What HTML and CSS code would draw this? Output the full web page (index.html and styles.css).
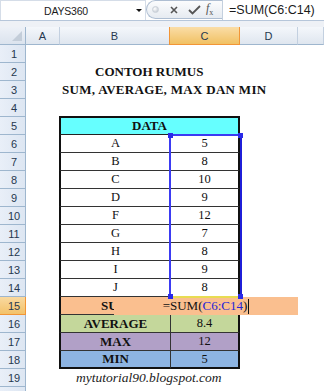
FILE: index.html
```html
<!DOCTYPE html>
<html lang="en">
<head>
  <meta charset="UTF-8" />
  <title>Contoh Rumus</title>
  <link rel="stylesheet" href="styles.css">
</head>
<body>
  <!-- Formula bar -->
  <div class="formula-bar">
    <div class="name-box">
      <span class="name">DAYS360</span>
      <span class="drop"></span>
    </div>
    <div class="fx-group">
      <span class="knob"></span>
      <svg class="btn-cancel" width="8" height="8" viewBox="0 0 8 8">
        <path d="M1 1 L7 7 M7 1 L1 7" stroke="#555" stroke-width="1.6" fill="none" />
      </svg>
      <svg class="btn-ok" width="13" height="10" viewBox="0 0 13 10">
        <path d="M1 5 L4.5 8.5 L12 1" stroke="#555" stroke-width="1.8" fill="none" />
      </svg>
      <span class="fx"><i>f</i><sub>x</sub></span>
    </div>
    <div class="formula-input">=SUM(C6:C14)</div>
  </div>
  <div class="strip"></div>

  <!-- Worksheet -->
  <div class="sheet">
    <div class="row head">
      <div class="corner"></div>
      <div class="ch">A</div>
      <div class="ch">B</div>
      <div class="ch on">C</div>
      <div class="ch">D</div>
      <div class="ch"></div>
    </div>

    <div class="row"><div class="rh">1</div></div>
    <div class="row"><div class="rh">2</div><div class="title t1">CONTOH RUMUS</div></div>
    <div class="row"><div class="rh">3</div><div class="title t2">SUM, AVERAGE, MAX DAN MIN</div></div>
    <div class="row"><div class="rh">4</div></div>
    <div class="row">
      <div class="rh">5</div><div class="c"></div>
      <div class="c data-head lbl">DATA</div>
    </div>
    <div class="row"><div class="rh">6</div><div class="c"></div><div class="c tb">A</div><div class="c tc">5</div></div>
    <div class="row"><div class="rh">7</div><div class="c"></div><div class="c tb">B</div><div class="c tc">8</div></div>
    <div class="row"><div class="rh">8</div><div class="c"></div><div class="c tb">C</div><div class="c tc">10</div></div>
    <div class="row"><div class="rh">9</div><div class="c"></div><div class="c tb">D</div><div class="c tc">9</div></div>
    <div class="row"><div class="rh">10</div><div class="c"></div><div class="c tb">F</div><div class="c tc">12</div></div>
    <div class="row"><div class="rh">11</div><div class="c"></div><div class="c tb">G</div><div class="c tc">7</div></div>
    <div class="row"><div class="rh">12</div><div class="c"></div><div class="c tb">H</div><div class="c tc">8</div></div>
    <div class="row"><div class="rh">13</div><div class="c"></div><div class="c tb">I</div><div class="c tc">9</div></div>
    <div class="row"><div class="rh">14</div><div class="c"></div><div class="c tb">J</div><div class="c tc">8</div></div>
    <div class="row">
      <div class="rh on">15</div><div class="c"></div>
      <div class="c tb lbl sum">SUM</div><div class="c tc sum"></div>
    </div>
    <div class="row">
      <div class="rh">16</div><div class="c"></div>
      <div class="c tb lbl avg">AVERAGE</div><div class="c tc avg">8.4</div>
    </div>
    <div class="row">
      <div class="rh">17</div><div class="c"></div>
      <div class="c tb lbl max">MAX</div><div class="c tc max">12</div>
    </div>
    <div class="row">
      <div class="rh">18</div><div class="c"></div>
      <div class="c tb lbl min last">MIN</div><div class="c tc min last">5</div>
    </div>
    <div class="row"><div class="rh">19</div><div class="credit">mytutorial90.blogspot.com</div></div>
    <div class="row"><div class="rh"></div></div>

    <!-- range being referenced while editing C15 -->
    <div class="selection">
      <span class="handle h-tl"></span>
      <span class="handle h-tr"></span>
      <span class="handle h-bl"></span>
      <span class="handle h-br"></span>
    </div>
    <div class="editor">=SUM(<span class="ref">C6:C14</span>)<span class="caret"></span></div>
  </div>
</body>
</html>
```

FILE: styles.css
```css
/* Global */
body {
  margin: 0;
  background-color: #ffffff;
  font-family: "Liberation Sans", Arial, sans-serif;
  color: #1b1b1b;
}

/* Formula bar */
.formula-bar {
  display: flex;
  height: 21px;
  background-color: #ffffff;
  border-bottom: 1px solid #b6c6da;
  box-sizing: border-box;
}
.name-box {
  width: 146px;
  display: flex;
  align-items: center;
  border: 1px solid #d5dde8;
  border-bottom: none;
  box-sizing: border-box;
}
.name {
  width: 130px;
  text-align: center;
  font-size: 10.5px;
  letter-spacing: -0.2px;
}
.drop {
  margin-left: 5px;
  width: 0;
  height: 0;
  border-left: 3px solid transparent;
  border-right: 3px solid transparent;
  border-top: 3px solid #111;
}
.fx-group {
  width: 76px;
  height: 19px;
  display: flex;
  align-items: center;
  border: 1px solid #aebed2;
  border-right: none;
  border-radius: 10px 0 0 10px;
  background: linear-gradient(#fbfcfd, #e6ebf1);
  box-sizing: border-box;
}
.knob {
  width: 7px;
  height: 7px;
  margin-left: 5px;
  border-radius: 50%;
  background: radial-gradient(circle at 35% 35%, #ffffff, #b9c1cb);
  border: 1px solid #c9d0d8;
  box-sizing: border-box;
}
.btn-cancel {
  margin-left: 11px;
}
.btn-ok {
  margin-left: 10px;
}
.fx {
  margin-left: 5px;
  font-family: "Liberation Serif", serif;
  font-size: 12px;
  color: #555;
}
.fx sub {
  font-size: 8px;
}
.formula-input {
  flex: 1;
  padding-left: 6px;
  font-size: 12.5px;
  line-height: 20px;
  border-left: 1px solid #c4d0de;
}
.strip {
  height: 6px;
  background-color: #eef1f6;
}

/* Sheet grid */
.sheet {
  position: relative;
}
.row {
  display: grid;
  grid-template-columns: 26px 34px 110px 70px 58px 1fr;
  height: 18px;
}
.rh,
.ch,
.corner {
  display: flex;
  align-items: center;
  justify-content: center;
  box-sizing: border-box;
  font-size: 11px;
  color: #26384f;
  border-bottom: 1px solid #9eb6ce;
}
.rh {
  padding-left: 3px;
  background: linear-gradient(to right, #e9eff8, #dde6f2);
  border-right: 1px solid #9eb6ce;
}
.rh.on {
  background: linear-gradient(#f9d9a0, #f3c26a);
  border-bottom-color: #f29536;
  border-right-color: #f29536;
}
.ch {
  background: linear-gradient(#f4f7fb, #dfe6ef);
  border-right: 1px solid #c3d0e0;
}
.ch.on {
  background: linear-gradient(#fadda7, #f1c163);
  border-left: 1px solid #f29536;
  border-right-color: #f29536;
  border-bottom-color: #f29536;
  margin-left: -1px;
}
.corner {
  position: relative;
  background: linear-gradient(#edf1f7, #dbe3ee);
  border-right: 1px solid #9eb6ce;
}
.corner::after {
  content: "";
  position: absolute;
  right: 3px;
  bottom: 3px;
  border-left: 10px solid transparent;
  border-bottom: 10px solid #c3cdd9;
}

/* Cells */
.c {
  display: flex;
  align-items: center;
  justify-content: center;
  box-sizing: border-box;
  font-family: "Liberation Serif", "Times New Roman", serif;
  font-size: 12.5px;
  color: #111;
}
.lbl {
  font-weight: bold;
  font-size: 13px;
}
.title {
  grid-column: 2 / -1;
  display: flex;
  align-items: center;
  font-family: "Liberation Serif", "Times New Roman", serif;
  font-weight: bold;
  font-size: 13px;
  color: #111;
}
.t1 {
  padding-left: 69px;
}
.t2 {
  padding-left: 36px;
  letter-spacing: 0.3px;
}
.credit {
  grid-column: 2 / -1;
  display: flex;
  align-items: center;
  padding-left: 50px;
  font-family: "Liberation Serif", "Times New Roman", serif;
  font-style: italic;
  font-size: 13.5px;
  color: #222;
}

/* Table */
.data-head {
  grid-column: 3 / 5;
  background-color: #66ffff;
  border: 2px solid #111;
  border-bottom: 1px solid #222;
  margin-left: -1px;
  margin-top: -1px;
  height: 19px;
}
.tb {
  border-left: 2px solid #111;
  border-bottom: 1px solid #333;
  margin-left: -1px;
}
.tc {
  border-left: 1px solid #333;
  border-right: 2px solid #111;
  border-bottom: 1px solid #333;
}
.tc.last,
.tb.last {
  border-bottom: 2px solid #111;
}
.sum {
  background-color: #fabf8f;
}
.avg {
  background-color: #c4d79b;
}
.max {
  background-color: #b1a0c7;
}
.min {
  background-color: #8db4e2;
}

/* Edit state */
.editor {
  position: absolute;
  left: 114px;
  top: 270px;
  width: 184px;
  height: 18px;
  display: flex;
  align-items: center;
  justify-content: center;
  background-color: #fabf8f;
  font-family: "Liberation Serif", "Times New Roman", serif;
  font-size: 13px;
  color: #111;
}
.ref {
  color: #2424d6;
}
.caret {
  width: 1px;
  height: 15px;
  margin-left: 1px;
  background-color: #111;
}
.selection {
  position: absolute;
  left: 169px;
  top: 107px;
  width: 73px;
  height: 164px;
  border: 2px solid #3b3bf2;
  border-right-color: #1f1fd8;
  border-bottom-color: #e8dc52;
  box-sizing: border-box;
  z-index: 2;
}
.handle {
  position: absolute;
  width: 5px;
  height: 5px;
  background-color: #2a2ae8;
}
.h-tl { left: -3px; top: -3px; }
.h-tr { right: -3px; top: -3px; }
.h-bl { left: -3px; bottom: -3px; }
.h-br { right: -3px; bottom: -3px; }
```
